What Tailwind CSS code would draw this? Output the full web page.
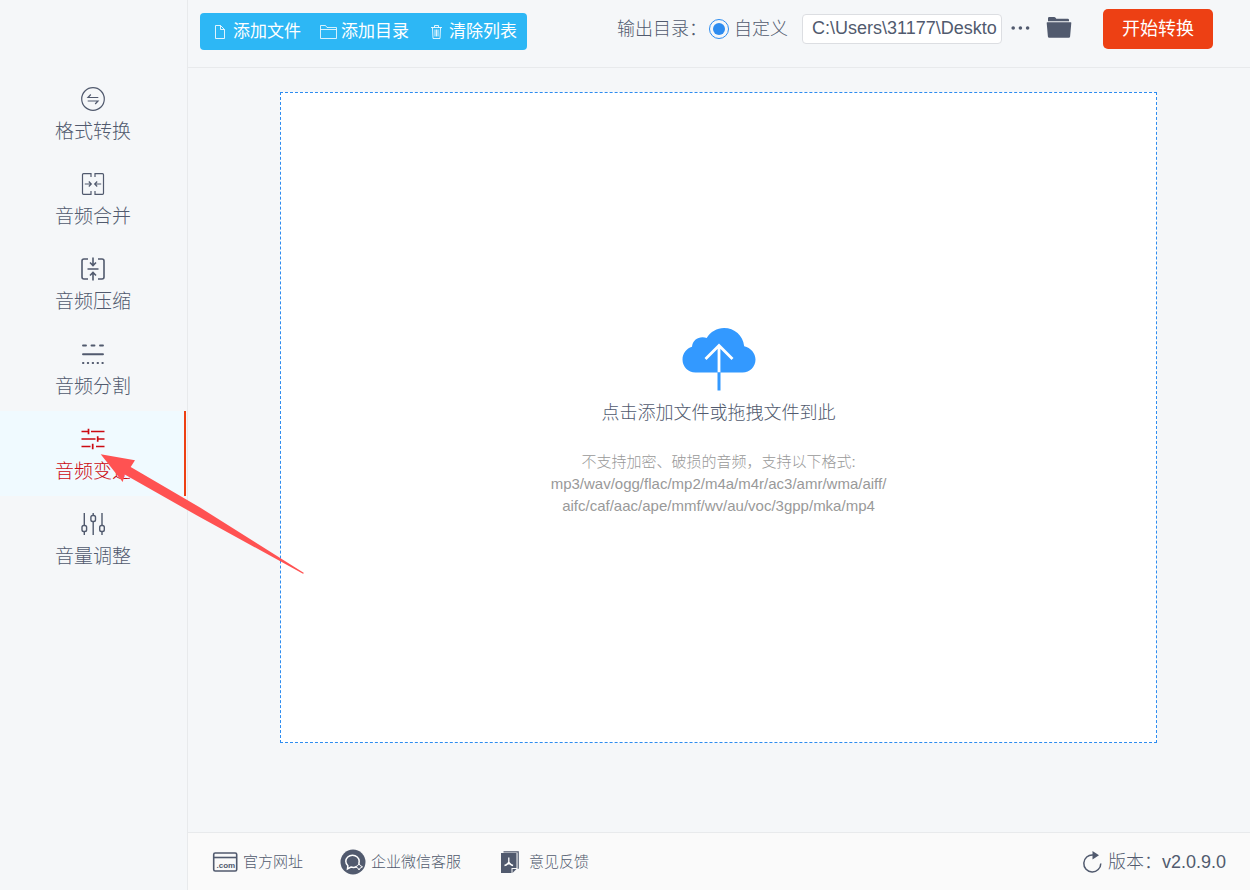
<!DOCTYPE html>
<html lang="zh-CN">
<head>
    <meta charset="UTF-8">
    <meta name="viewport" content="width=device-width, initial-scale=1.0">
    <title>音频转换器</title>
    <script src="https://cdn.jsdelivr.net/npm/@tailwindcss/browser@4"></script>
</head>
<body class="relative flex min-h-screen bg-[#f5f7f9] font-['Liberation_Sans','Noto_Sans_CJK_SC',sans-serif] font-light text-[#515a6e]">

    <!-- Sidebar -->
    <nav class="w-[188px] shrink-0 border-r border-[#e8eaec] pt-[71px] pr-px text-[19px] leading-6">
        <a href="#" class="flex h-[85px] flex-col items-center gap-2 pt-[15px]">
            <svg class="h-[26px] w-[26px]" viewBox="0 0 26 26" fill="none" stroke="currentColor" stroke-width="1.2">
                <circle cx="13" cy="13" r="11.3"/>
                <path d="M18.300 11.500H8L10.800 8.500M7.700 15h10.300L15.200 18" stroke-width="1.200"/>
            </svg>
            格式转换
        </a>
        <a href="#" class="flex h-[85px] flex-col items-center gap-2 pt-[15px]">
            <svg class="h-[26px] w-[26px]" viewBox="0 0 26 26" fill="none" stroke="currentColor" stroke-width="1.2">
                <path d="M11 6V2.700H3.500a1 1 0 0 0-1 1v18.600a1 1 0 0 0 1 1H11V20M15 6V2.700h7.500a1 1 0 0 1 1 1v18.600a1 1 0 0 1-1 1H15V20"/>
                <path d="M4.800 13h6.500M8.800 10.500l2.500 2.500-2.500 2.500M21.200 13h-6.500M17.200 10.500L14.700 13l2.500 2.500"/>
            </svg>
            音频合并
        </a>
        <a href="#" class="flex h-[85px] flex-col items-center gap-2 pt-[15px]">
            <svg class="h-[26px] w-[26px]" viewBox="0 0 26 26" fill="none" stroke="currentColor" stroke-width="1.6">
                <path d="M8 3H4a2 2 0 0 0-2 2v16a2 2 0 0 0 2 2h4M18 3h4a2 2 0 0 1 2 2v16a2 2 0 0 1-2 2h-4"/>
                <path d="M7.500 13h11M13 1.500V9M10 6.500l3 3 3-3M13 24.500V17M10 19.500l3-3 3 3"/>
            </svg>
            音频压缩
        </a>
        <a href="#" class="flex h-[85px] flex-col items-center gap-2 pt-[15px]">
            <svg class="h-[26px] w-[26px]" viewBox="0 0 26 26" fill="none" stroke="currentColor" stroke-width="1.9" stroke-linecap="round">
                <path d="M3 4.500h3M11.500 4.500h3M20 4.500h3M3 13.300h20"/>
                <path d="M2.900 22h.6M7.700 22h.6M12.600 22h.6M17.500 22h.6M22.300 22h.6" stroke-width="1.8"/>
            </svg>
            音频分割
        </a>
        <a href="#" class="flex h-[85px] flex-col items-center gap-2 border-r-2 border-[#ed4014] bg-[#f0faff] pt-[15px] pl-0.5 text-[#cc0a12]">
            <svg class="h-[26px] w-[26px]" viewBox="0 0 26 26" fill="none" stroke="currentColor" stroke-width="1.7">
                <path d="M1.500 5.500h7M11 5.500h13.500M1.500 13h14M18.500 13h6M1.500 20.500h9M16 20.500h8.500M8.500 2.800v5.400M17.700 10.300v5.400M12.700 17.800v5.400"/>
            </svg>
            音频变速
        </a>
        <a href="#" class="flex h-[85px] flex-col items-center gap-2 pt-[15px]">
            <svg class="h-[26px] w-[26px]" viewBox="0 0 26 26" fill="none" stroke="currentColor" stroke-width="1.4">
                <path d="M4.300 2v12.500M4.300 20.500V24M13.200 2v2.500M13.200 10.500V24M22 2v12.500M22 20.500V24"/>
                <rect x="2" y="14.500" width="4.600" height="6" rx="1.800"/>
                <rect x="10.900" y="4.500" width="4.600" height="6" rx="1.800"/>
                <rect x="19.700" y="14.500" width="4.600" height="6" rx="1.800"/>
            </svg>
            音量调整
        </a>
    </nav>

    <div class="flex min-w-0 flex-1 flex-col">
        <!-- Top bar -->
        <header class="flex h-[68px] items-start justify-between border-b border-[#e8eaec] pr-[37px] pl-3">
            <div class="mt-[13px] flex h-[37px] items-center gap-[18px] rounded bg-[#2db7f5] pr-2.5 pl-[11px] text-[17px] leading-6 font-normal whitespace-nowrap text-white">
                <button type="button" class="flex items-center gap-1">
                    <svg class="h-[18px] w-[18px]" viewBox="0 0 18 18" fill="none" stroke="currentColor" stroke-opacity=".85">
                        <path d="M4.500 2.500h5l4 4v9h-9zM9.500 2.500v4h4"/>
                    </svg>
                    添加文件
                </button>
                <button type="button" class="flex items-center gap-1">
                    <svg class="h-[18px] w-[18px]" viewBox="0 0 18 18" fill="none" stroke="currentColor" stroke-opacity=".8">
                        <path d="M1.500 15.500v-13h5l1.500 2h9.500v11zM1.500 6.500h16"/>
                    </svg>
                    添加目录
                </button>
                <button type="button" class="flex items-center gap-1">
                    <svg class="h-[18px] w-[18px]" viewBox="0 0 18 18" fill="none" stroke="currentColor" stroke-opacity=".85">
                        <path d="M4 4.500h11M7.500 4.500v-2h4v2M5.500 4.500l.5 11h7l.5-11M8 6.500v7M9.500 6.500v7M11 6.500v7"/>
                    </svg>
                    清除列表
                </button>
            </div>

            <div class="mt-[9px] flex h-10 items-center text-lg leading-6 whitespace-nowrap">
                <span>输出目录：</span>
                <label class="ml-0.5 flex items-center gap-[5px]">
                    <input type="radio" name="outdir" checked class="h-5 w-5 appearance-none rounded-full border border-[#2d8cf0] bg-[#2d8cf0] bg-clip-content p-[3px]">
                    自定义
                </label>
                <input type="text" aria-label="输出目录" value="C:\Users\31177\Deskto" class="ml-3.5 h-[30px] w-[200px] rounded border border-[#dcdee2] bg-white pr-1 pb-0.5 pl-[9px] text-lg">
                <button type="button" aria-label="选择目录" class="ml-2">
                    <svg class="h-5 w-5" viewBox="0 0 20 20" fill="currentColor">
                        <circle cx="3.200" cy="9" r="1.800"/><circle cx="10.400" cy="9" r="1.800"/><circle cx="17.600" cy="9" r="1.800"/>
                    </svg>
                </button>
                <button type="button" aria-label="打开目录" class="ml-4">
                    <svg class="h-[26px] w-[26px]" viewBox="0 0 26 26" fill="currentColor">
                        <path d="M2 5.200V2.200Q2 1 3.200 1H8q1.200 0 1.800 1l.5.800h11.500q1.200 0 1.200 1.200v1.200z"/>
                        <path d="M1.200 6.200h23.600q.6 0 .5.700l-1.200 13.600q-.1 1.300-1.400 1.300H3.300q-1.300 0-1.400-1.300L.7 6.900q-.1-.7.5-.700z"/>
                    </svg>
                </button>
                <button type="button" class="ml-[31px] h-10 w-[110px] rounded-[5px] bg-[#ed4014] font-normal text-white">开始转换</button>
            </div>
        </header>

        <!-- Drop zone -->
        <main class="flex flex-1 pt-6 pr-[93px] pb-[89px] pl-[92px]">
            <button type="button" class="flex flex-1 flex-col items-center justify-center border border-dashed border-[#2d8cf0] bg-white pt-2">
                <svg class="h-16 w-[74px]" viewBox="0 0 74 64" fill="none">
                    <path d="M13.500 45.500C6 45.500.5 39.800.5 32.500c0-6 4-11 9.500-12.700.5-6 5-9.600 10.500-9.600 1.600 0 3 .2 4.200.8C28.500 4.800 35 1 42 1c10.500 0 19 7.500 20.200 18.200 6.500 1.500 11.300 7 11.300 13.300 0 7.300-5.500 13-13 13z" fill="#3399ff"/>
                    <path d="M37 45V18.500M23.500 32L37 18.500 50.500 32" stroke="#fff" stroke-width="2.800"/>
                    <path d="M37 45.500v18" stroke="#3399ff" stroke-width="3"/>
                </svg>
                <span class="mt-2.5 text-lg leading-6">点击添加文件或拖拽文件到此</span>
                <span class="mt-[26px] text-[15px] leading-[22px] text-[#999]">
                    不支持加密、破损的音频，支持以下格式:<br>
                    mp3/wav/ogg/flac/mp2/m4a/m4r/ac3/amr/wma/aiff/<br>
                    aifc/caf/aac/ape/mmf/wv/au/voc/3gpp/mka/mp4
                </span>
            </button>
        </main>

        <!-- Footer -->
        <footer class="flex h-[58px] items-center justify-between border-t border-[#e8eaec] bg-[#fafafa] px-6 text-[15px] leading-6">
            <div class="flex items-center gap-[37px]">
                <a href="#" class="flex items-center gap-[5px]">
                    <svg class="h-[26px] w-[26px]" viewBox="0 0 26 26" fill="none" stroke="currentColor" stroke-width="1.6">
                        <rect x="1.700" y="4" width="23" height="18" rx="1.500"/>
                        <path d="M1.700 8.500h23"/>
                        <text x="4.500" y="19" font-size="8" font-weight="700" fill="currentColor" stroke="none">.com</text>
                    </svg>
                    官方网址
                </a>
                <a href="#" class="flex items-center gap-[5px]">
                    <svg class="h-[26px] w-[26px]" viewBox="0 0 26 26" fill="none">
                        <circle cx="13" cy="13" r="12.500" fill="currentColor"/>
                        <path d="M16.500 17.700c-1.500.7-3.500.9-5.500.4L7.500 20l.4-3.300C6.500 15.500 5.800 14 5.800 12.300c0-3.500 3-6 6.700-6s6.700 2.500 6.700 6c0 .9-.2 1.700-.5 2.400" stroke="#fff" stroke-width="1.500"/>
                        <path d="M19 14.500l1.200 2 2.300 1.300-2.300 1.200-1.200 2-1.200-2-2.300-1.200 2.300-1.300z" stroke="#fff"/>
                    </svg>
                    企业微信客服
                </a>
                <a href="#" class="flex items-center gap-[5px]">
                    <svg class="h-[26px] w-[26px]" viewBox="0 0 26 26" fill="none">
                        <path d="M5.500 2.800h14.700v17" stroke="currentColor" stroke-width="1.200"/>
                        <path d="M3 4h15.500v15h-5v5H3z" fill="currentColor"/>
                        <path d="M18.500 20l-4 4v-4z" fill="currentColor"/>
                        <path d="M10.800 8.500v4.500c-.5 1.500-2 3-4.300 3.500M10.800 13c.5 1.500 2 3 4.300 3.500M8.500 14.800h4.600" stroke="#fff" stroke-width="1.300"/>
                    </svg>
                    意见反馈
                </a>
            </div>
            <button type="button" class="flex items-center gap-[5px] text-lg leading-6">
                <svg class="h-[22px] w-[22px]" viewBox="0 0 22 22" fill="none" stroke="currentColor" stroke-width="1.500">
                    <path d="M12 4a8.500 8.500 0 1 0 7.800 8.500"/>
                    <path d="M11.500 0l6.500 4.200-6.500 4.200z" fill="currentColor" stroke="none"/>
                </svg>
                <span>版本：v2.0.9.0</span>
            </button>
        </footer>
    </div>

    <!-- Arrow over the active menu item -->
    <svg class="pointer-events-none absolute top-[454px] left-[100px] h-[120px] w-[205px]" viewBox="0 0 205 120" fill="#ff5252">
        <path d="M.7.3L35 6.300 30.700 13 100 53.500 204 119 203 119.700 97 61.500 24.700 20.500 22.700 28z"/>
    </svg>
</body>
</html>
